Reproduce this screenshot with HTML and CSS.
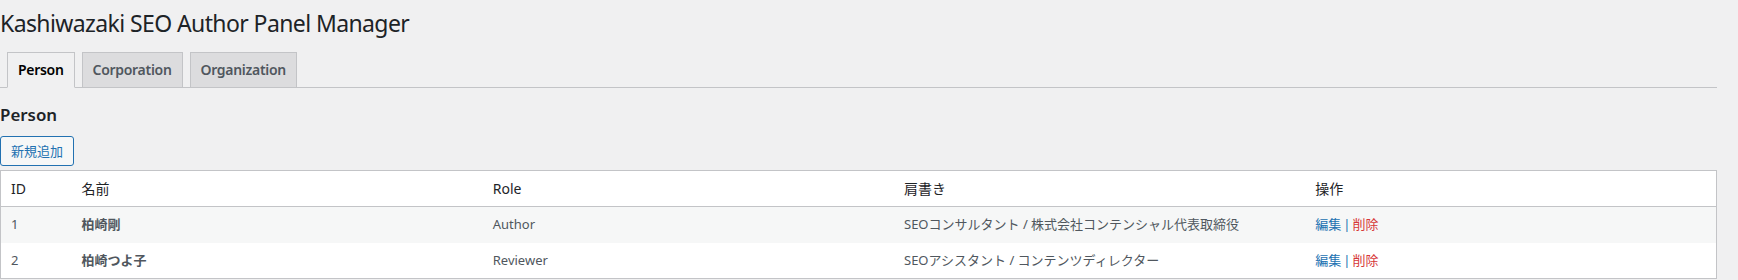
FILE: index.html
```html
<!DOCTYPE html>
<html lang="ja">
<head>
<meta charset="UTF-8">
<title>Kashiwazaki SEO Author Panel Manager</title>
<link rel="stylesheet" href="styles.css">
</head>
<body>

<div class="wrap">
  <h1>Kashiwazaki SEO Author Panel Manager</h1>

  <nav class="tabs">
    <a class="tab active">Person</a>
    <a class="tab">Corporation</a>
    <a class="tab">Organization</a>
  </nav>

  <h2>Person</h2>

  <a class="button">新規追加</a>

  <table class="list">
    <colgroup>
      <col class="col-id">
      <col>
      <col>
      <col>
      <col>
    </colgroup>
    <thead>
      <tr>
        <th>ID</th>
        <th>名前</th>
        <th>Role</th>
        <th>肩書き</th>
        <th>操作</th>
      </tr>
    </thead>
    <tbody>
      <tr>
        <td>1</td>
        <td><strong>柏崎剛</strong></td>
        <td>Author</td>
        <td>SEOコンサルタント / 株式会社コンテンシャル代表取締役</td>
        <td><a class="edit">編集</a><span class="sep">|</span><a class="delete">削除</a></td>
      </tr>
      <tr>
        <td>2</td>
        <td><strong>柏崎つよ子</strong></td>
        <td>Reviewer</td>
        <td>SEOアシスタント / コンテンツディレクター</td>
        <td><a class="edit">編集</a><span class="sep">|</span><a class="delete">削除</a></td>
      </tr>
    </tbody>
  </table>
</div>

</body>
</html>
```

FILE: styles.css
```css
body {
  margin: 0;
  font-family: "Noto Sans", "Noto Sans CJK JP", sans-serif;
  font-size: 13px;
  color: #3c434a;
  background: #f0f0f1;
}

.wrap {
  margin-right: 21px;
}

h1 {
  margin: 0;
  padding: 9px 0 4px;
  font-size: 23px;
  font-weight: 400;
  line-height: 1.3;
  letter-spacing: -0.6px;
  color: #1d2327;
}

/* タブ */
.tabs {
  display: flex;
  padding-top: 9px;
  border-bottom: 1px solid #c3c4c7;
}

.tab {
  margin-left: 7px;
  margin-bottom: -1px;
  padding: 5px 10px;
  font-size: 14px;
  font-weight: 600;
  line-height: 24px;
  letter-spacing: -0.3px;
  color: #50575e;
  background: #dcdcde;
  border: 1px solid #c3c4c7;
}

.tab.active {
  color: #000;
  background: #f0f0f1;
  border-bottom-color: #f0f0f1;
}

h2 {
  margin: 15px 0 0;
  font-size: 16.9px;
  font-weight: 600;
  line-height: 24px;
  color: #1d2327;
}

.button {
  display: inline-block;
  margin-top: 9px;
  padding: 0 10px;
  font-size: 13px;
  line-height: 28px;
  color: #2271b1;
  background: #f6f7f7;
  border: 1px solid #2271b1;
  border-radius: 3px;
}

/* 一覧 */
.list {
  width: 100%;
  margin-top: 4px;
  table-layout: fixed;
  border-collapse: collapse;
  background: #fff;
  border: 1px solid #c3c4c7;
}

.col-id {
  width: 71px;
}

.list th {
  padding: 8px 10px;
  font-size: 14px;
  font-weight: 400;
  line-height: 19.6px;
  text-align: left;
  color: #1d2327;
  border-bottom: 1px solid #c3c4c7;
}

.list td {
  padding: 8px 10px;
  line-height: 19.5px;
  color: #50575e;
}

.list tbody tr:nth-child(odd) {
  background: #f6f7f7;
}

.list strong {
  font-weight: 700;
}

.edit {
  color: #2271b1;
}

.sep {
  margin: 0 2px;
  color: #2271b1;
}

.delete {
  color: #d63638;
}
```
